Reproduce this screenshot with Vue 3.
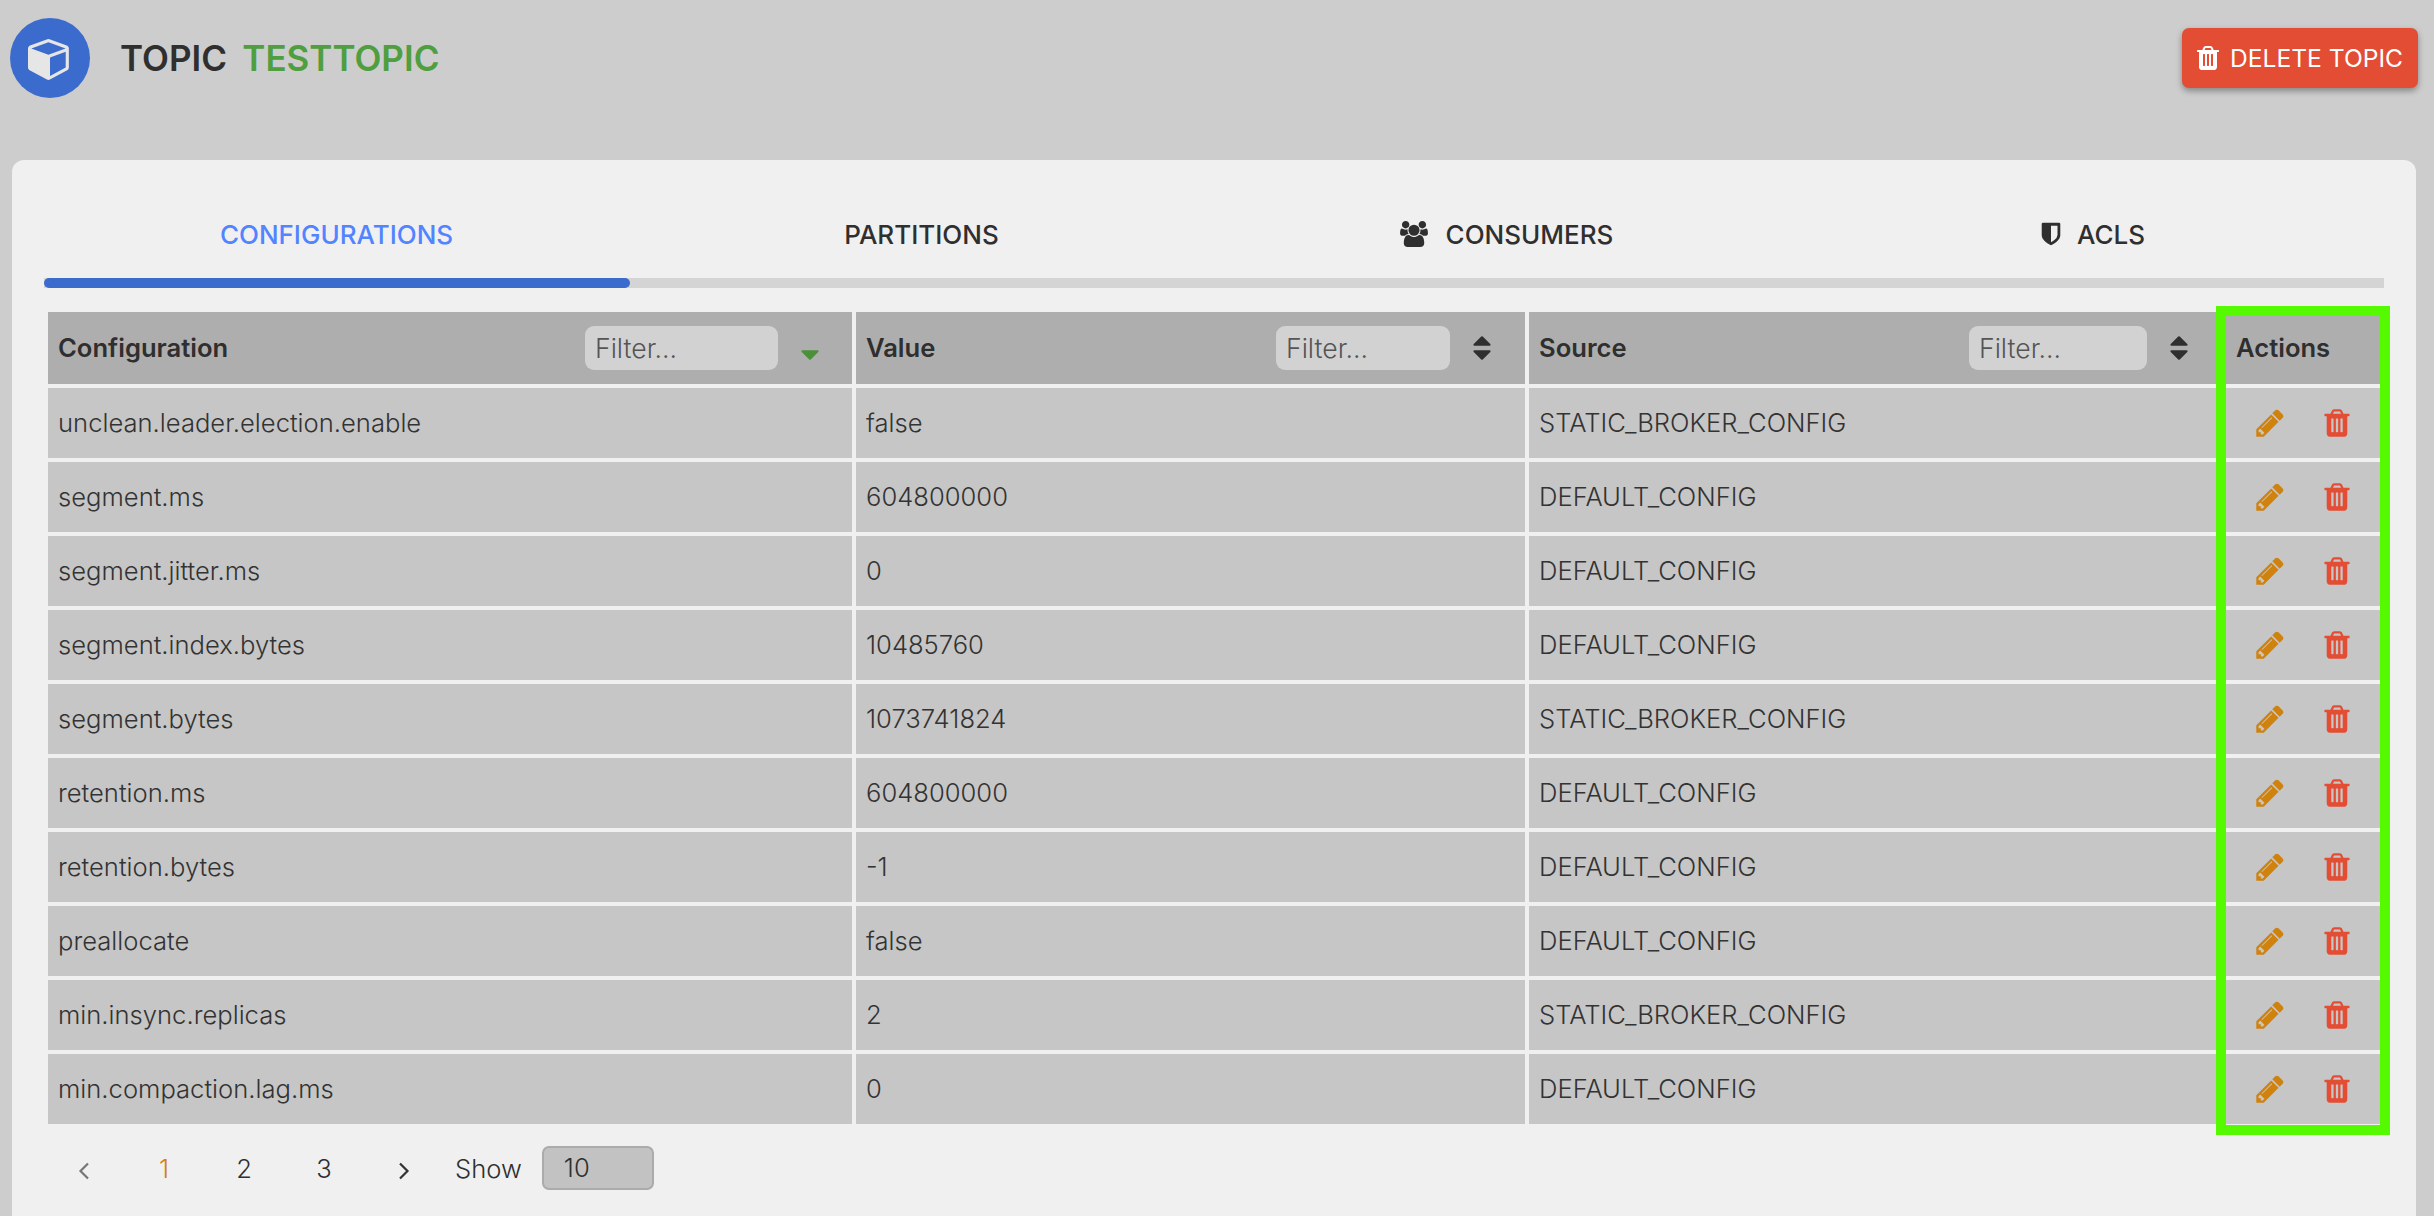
<script setup>
import { ref } from 'vue'

const tabs = [
  { label: 'CONFIGURATIONS', active: true },
  { label: 'PARTITIONS' },
  { label: 'CONSUMERS', icon: 'users' },
  { label: 'ACLS', icon: 'shield' }
]

const columns = [
  { title: 'Configuration', filter: 193, sorted: true },
  { title: 'Value', filter: 174 },
  { title: 'Source', filter: 178 }
]

const rows = ref([
  ['unclean.leader.election.enable', 'false', 'STATIC_BROKER_CONFIG'],
  ['segment.ms', '604800000', 'DEFAULT_CONFIG'],
  ['segment.jitter.ms', '0', 'DEFAULT_CONFIG'],
  ['segment.index.bytes', '10485760', 'DEFAULT_CONFIG'],
  ['segment.bytes', '1073741824', 'STATIC_BROKER_CONFIG'],
  ['retention.ms', '604800000', 'DEFAULT_CONFIG'],
  ['retention.bytes', '-1', 'DEFAULT_CONFIG'],
  ['preallocate', 'false', 'DEFAULT_CONFIG'],
  ['min.insync.replicas', '2', 'STATIC_BROKER_CONFIG'],
  ['min.compaction.lag.ms', '0', 'DEFAULT_CONFIG']
])

const trashPath = 'M704 1376v-704q0-14-9-23t-23-9h-64q-14 0-23 9t-9 23v704q0 14 9 23t23 9h64q14 0 23-9t9-23zm256 0v-704q0-14-9-23t-23-9h-64q-14 0-23 9t-9 23v704q0 14 9 23t23 9h64q14 0 23-9t9-23zm256 0v-704q0-14-9-23t-23-9h-64q-14 0-23 9t-9 23v704q0 14 9 23t23 9h64q14 0 23-9t9-23zm-544-992h448l-48-117q-7-9-17-11h-317q-10 2-17 11zm928 32v64q0 14-9 23t-23 9h-96v948q0 83-47 143.5t-113 60.5h-832q-66 0-113-58.5t-47-141.5v-952h-96q-14 0-23-9t-9-23v-64q0-14 9-23t23-9h309l70-167q15-37 54-63t79-26h320q40 0 79 26t54 63l70 167h309q14 0 23 9t9 23z'
const pencilPath = 'M491 1536l91-91-235-235-91 91v107h128v128h107zm523-928q0-22-22-22-10 0-17 7l-542 542q-7 7-7 17 0 22 22 22 10 0 17-7l542-542q7-7 7-17zm-54-192l416 416-832 832h-416v-416zm683 96q0 53-37 90l-166 166-416-416 166-165q36-38 90-38 53 0 91 38l235 234q37 39 37 91z'
const usersPath = 'M593 896q-162 5-265 128h-134q-82 0-138-40.5t-56-118.5q0-353 124-353 6 0 43.5 21t97.5 42.5 119 21.5q67 0 133-23-5 37-5 66 0 139 81 256zm1071 637q0 120-73 189.5t-194 69.5h-874q-121 0-194-69.5t-73-189.5q0-53 3.5-103.5t14-109 26.5-108.5 43-97.5 62-81 85.5-53.5 111.5-20q10 0 43 21.5t73 48 107 48 135 21.5 135-21.5 107-48 73-48 43-21.5q61 0 111.5 20t85.5 53.5 62 81 43 97.5 26.5 108.5 14 109 3.5 103.5zm-1024-1277q0 106-75 181t-181 75-181-75-75-181 75-181 181-75 181 75 75 181zm704 384q0 159-112.5 271.5t-271.5 112.5-271.5-112.5-112.5-271.5 112.5-271.5 271.5-112.5 271.5 112.5 112.5 271.5zm576 225q0 78-56 118.5t-138 40.5h-134q-103-123-265-128 81-117 81-256 0-29-5-66 66 23 133 23 59 0 119-21.5t97.5-42.5 43.5-21q124 0 124 353zm-128-609q0 106-75 181t-181 75-181-75-75-181 75-181 181-75 181 75 75 181z'
const shieldPath = 'M1344 960v-640h-448v1137q119-63 213-137 235-184 235-360zm192-768v768q0 86-33.5 170.5t-83 150-118 127.5-126.5 103-121 77.5-89.5 49.5-42.5 20q-12 6-26 6t-26-6q-16-7-42.5-20t-89.5-49.5-121-77.5-126.5-103-118-127.5-83-150-33.5-170.5v-768q0-26 19-45t45-19h1152q26 0 45 19t19 45z'
const cubePath = 'M896 1629l640-349v-636l-640 233v752zm-64-865l698-253-698-253-698 253zm832-252v768q0 35-18 65t-49 47l-704 384q-28 16-61 16t-61-16l-704-384q-31-17-49-47t-18-65v-768q0-40 23-73t61-49l704-256q22-8 44-8t44 8l704 256q38 16 61 49t23 73z'
const sortPath = 'M1408 1088q0 26-19 45l-448 448q-19 19-45 19t-45-19l-448-448q-19-19-19-45t19-45 45-19h896q26 0 45 19t19 45zm0-384q0 26-19 45t-45 19h-896q-26 0-45-19t-19-45 19-45l448-448q19-19 45-19t45 19l448 448q19 19 19 45z'
const sortDownPath = 'M1408 1088q0 26-19 45l-448 448q-19 19-45 19t-45-19l-448-448q-19-19-19-45t19-45 45-19h896q26 0 45 19t19 45z'
</script>

<template>
  <div class="page">

    <!-- HEADER -->
    <header class="top">
      <div class="avatar">
        <svg class="cube" viewBox="0 0 1792 1792"><path :d="cubePath" /></svg>
      </div>
      <h1 class="title">TOPIC <span class="topic-name">TESTTOPIC</span></h1>
      <button class="delete-btn">
        <svg class="delete-icon" viewBox="0 0 1792 1792"><path :d="trashPath" /></svg>
        DELETE TOPIC
      </button>
    </header>

    <main class="card">

      <!-- TABS -->
      <nav class="tabs">
        <div
          v-for="tab in tabs"
          :key="tab.label"
          class="tab"
          :class="{ active: tab.active }"
        >
          <svg v-if="tab.icon === 'users'" class="users-icon" viewBox="0 0 1920 1792"><path :d="usersPath" /></svg>
          <svg v-if="tab.icon === 'shield'" class="shield-icon" viewBox="0 0 1792 1792"><path :d="shieldPath" /></svg>
          {{ tab.label }}
        </div>
      </nav>
      <div class="track"><div class="track-fill"></div></div>

      <!-- TABLE -->
      <div class="table-wrap">
        <table class="grid">
          <colgroup>
            <col class="col-name" />
            <col class="col-value" />
            <col class="col-source" />
            <col class="col-actions" />
          </colgroup>
          <thead>
            <tr>
              <th v-for="col in columns" :key="col.title">
                <div class="th-inner">
                  <span class="th-title">{{ col.title }}</span>
                  <input class="filter" placeholder="Filter..." :style="{ width: col.filter + 'px' }" />
                  <svg v-if="col.sorted" class="sort sorted" viewBox="0 0 1792 1792"><path :d="sortDownPath" /></svg>
                  <svg v-else class="sort" viewBox="0 0 1792 1792"><path :d="sortPath" /></svg>
                </div>
              </th>
              <th>Actions</th>
            </tr>
          </thead>
          <tbody>
            <tr v-for="row in rows" :key="row[0]">
              <td v-for="(cell, i) in row" :key="i">{{ cell }}</td>
              <td>
                <div class="actions">
                  <svg class="action edit" viewBox="0 0 1792 1792"><path :d="pencilPath" /></svg>
                  <svg class="action remove" viewBox="0 0 1792 1792"><path :d="trashPath" /></svg>
                </div>
              </td>
            </tr>
          </tbody>
        </table>
        <div class="highlight"></div>
      </div>

      <!-- PAGINATION -->
      <div class="pager">
        <span class="page-item">
          <svg class="chevron muted" viewBox="0 0 12 18"><polyline points="10,1.5 2.5,9 10,16.5" /></svg>
        </span>
        <span class="page-item current">1</span>
        <span class="page-item">2</span>
        <span class="page-item">3</span>
        <span class="page-item">
          <svg class="chevron" viewBox="0 0 12 18"><polyline points="2,1.5 9.5,9 2,16.5" /></svg>
        </span>
        <span class="show">Show</span>
        <div class="page-size">10</div>
      </div>

    </main>
  </div>
</template>

<style scoped>
.page {
  height: 1216px;
  overflow: hidden;
  background: #cdcdcd;
  color: #2f2f2f;
  font-family: Inter, "Liberation Sans", sans-serif;
  font-size: 25.6px;
}

/* HEADER */
.top {
  display: flex;
  align-items: center;
  height: 80px;
  padding: 18px 16px 0 10px;
}

.avatar {
  width: 80px;
  height: 80px;
  border-radius: 50%;
  background: #3b6bcc;
  display: flex;
  justify-content: center;
  align-items: center;
}

.cube {
  width: 44px;
  height: 44px;
  fill: #e6e6e6;
}

.title {
  margin: 0 0 0 30px;
  font-size: 35px;
  font-weight: 600;
  word-spacing: 6.5px;
}

.topic-name {
  color: #4f9e3f;
}

.delete-btn {
  margin-left: auto;
  width: 236px;
  height: 60px;
  padding: 0 0 0 12px;
  display: flex;
  align-items: center;
  gap: 8px;
  background: #e34d33;
  color: #fff;
  border: none;
  border-radius: 7px;
  font-family: inherit;
  font-size: 24.6px;
  font-weight: 400;
  box-shadow: 0 3px 6px rgba(0, 0, 0, 0.35);
}

.delete-icon {
  width: 28px;
  height: 28px;
  fill: #fff;
}

/* CARD */
.card {
  margin: 62px 18px 0 12px;
  padding: 0 32px;
  height: 1100px;
  background: #f0f0f0;
  border-radius: 12px 12px 0 0;
}

/* TABS */
.tabs {
  display: grid;
  grid-template-columns: repeat(4, 1fr);
  height: 118px;
  padding-top: 30px;
  box-sizing: border-box;
}

.tab {
  display: flex;
  justify-content: center;
  align-items: center;
  gap: 18px;
  font-weight: 500;
  font-size: 26px;
}

.tab.active {
  color: #5284ff;
}

.users-icon {
  width: 28px;
  height: 26px;
  fill: #2f2f2f;
}

.shield-icon {
  width: 26px;
  height: 26px;
  fill: #2f2f2f;
  margin-right: -5px;
}

.track {
  height: 10px;
  background: #d4d4d4;
}

.track-fill {
  width: 25.05%;
  height: 100%;
  background: #3b6bcc;
  border-radius: 5px;
}

/* TABLE */
.table-wrap {
  position: relative;
  margin-top: 20px;
}

.grid {
  width: 100%;
  table-layout: fixed;
  border-collapse: separate;
  border-spacing: 4px;
}

.col-name { width: 804px; }
.col-value { width: 669px; }
.col-source { width: 693px; }

th {
  height: 72px;
  padding: 0 10px 1px;
  box-sizing: border-box;
  background: #aeaeae;
  font-weight: 600;
  text-align: left;
}

td {
  height: 70px;
  padding: 0 10px 2px;
  box-sizing: border-box;
  background: #c6c6c6;
  font-weight: 300;
  color: #333;
}

.th-inner {
  display: flex;
  align-items: center;
}

.th-title {
  margin-right: auto;
}

.filter {
  height: 44px;
  box-sizing: border-box;
  padding: 0 10px;
  background: #d2d2d2;
  border: none;
  border-radius: 9px;
  font-family: inherit;
  font-size: 26.6px;
  font-weight: 300;
  color: #333;
  outline: none;
}

.filter::placeholder {
  color: #555;
  opacity: 1;
}

.sort {
  width: 30px;
  height: 30px;
  margin: 0 18px 0 17px;
  fill: #2f2f2f;
  flex: none;
}

.sort.sorted {
  fill: #4a9038;
  margin-right: 17px;
}

.actions {
  display: flex;
  justify-content: center;
  gap: 35px;
  transform: translateY(1px);
}

.action {
  width: 32px;
  height: 32px;
}

.edit { fill: #d0820f; }
.remove { fill: #e34d33; }

.highlight {
  position: absolute;
  left: 2172px;
  top: -2px;
  width: 174px;
  height: 829px;
  box-sizing: border-box;
  border: 10px solid #55f900;
  pointer-events: none;
}

/* PAGINATION */
.pager {
  display: flex;
  align-items: center;
  margin-top: 18px;
  height: 44px;
}

.page-item {
  width: 80px;
  text-align: center;
  font-weight: 300;
}

.page-item.current {
  color: #d0820f;
}

.chevron {
  width: 12px;
  height: 18px;
  fill: none;
  stroke: #333;
  stroke-width: 2.2;
  vertical-align: middle;
}

.chevron.muted {
  stroke: #777;
}

.show {
  margin: 0 20px 0 11px;
  font-weight: 300;
}

.page-size {
  width: 112px;
  height: 44px;
  box-sizing: border-box;
  padding-left: 20px;
  line-height: 40px;
  background: #c2c2c2;
  border: 2px solid #ababab;
  border-radius: 7px;
  font-weight: 300;
}
</style>

<style>
body {
  background: #cdcdcd;
}
</style>
